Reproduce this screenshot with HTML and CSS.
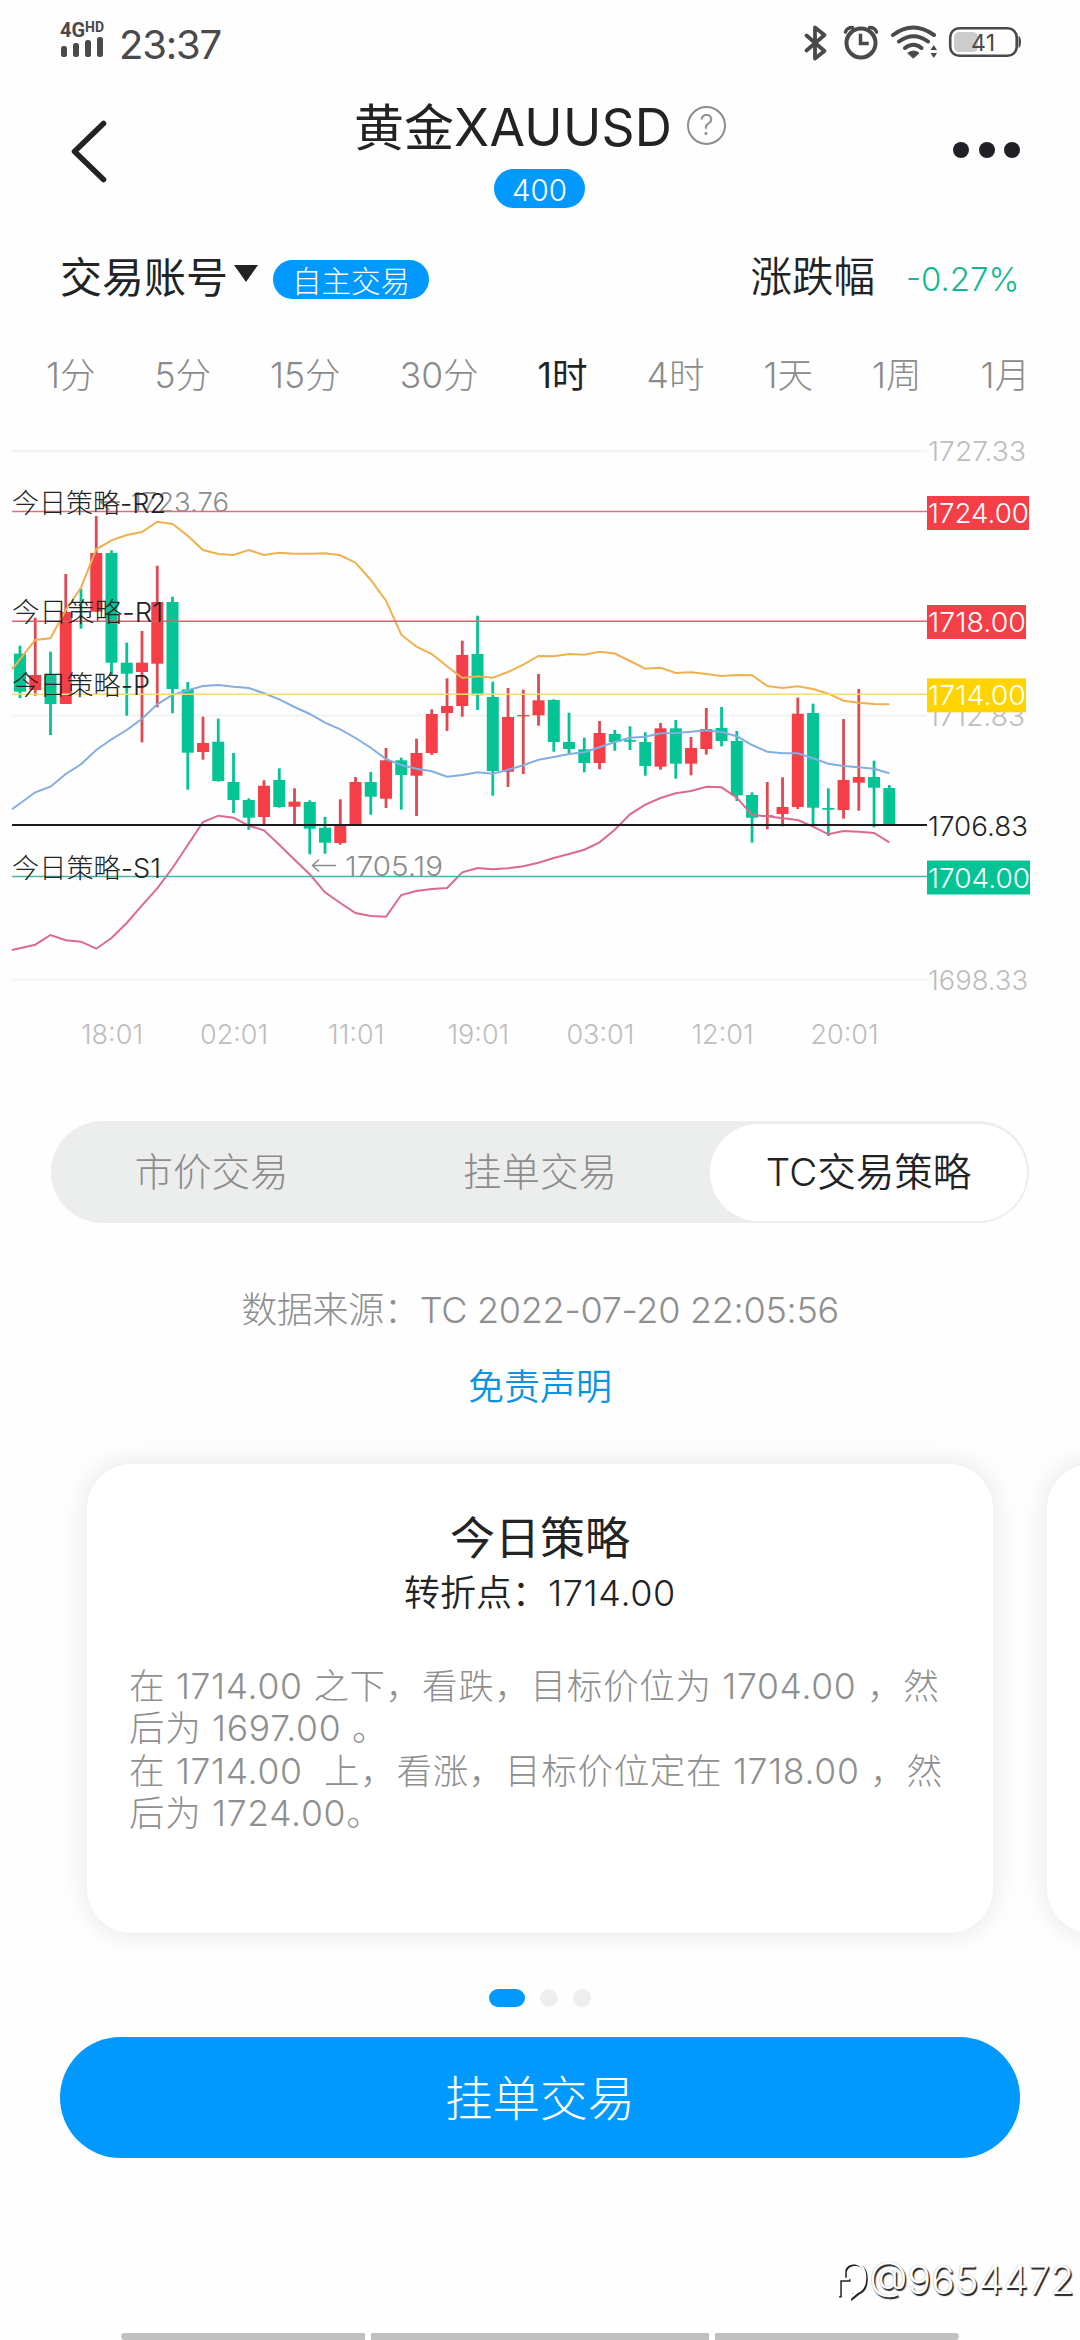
FILE: index.html
```html
<!DOCTYPE html>
<html lang="zh-CN">
<head>
<meta charset="utf-8">
<title>黄金XAUUSD</title>
<link rel="stylesheet" href="styles.css">
</head>
<body>
<div class="screen">
  <div class="status">
    <div class="signal">
      <div class="net"><span class="g4">4G</span><span class="hd">HD</span></div>
      <svg width="44" height="20" viewBox="0 0 44 20" fill="#4a4a4a"><rect x="1" y="9" width="6" height="11" rx="2.5"/><rect x="13" y="6" width="6" height="14" rx="2.5"/><rect x="25" y="3" width="6" height="17" rx="2.5"/><rect x="37" y="0" width="6" height="20" rx="2.5"/></svg>
    </div>
    <div class="time">23:37</div>
    <svg class="status-icons" width="220" height="40" viewBox="802 22 220 40" fill="none" stroke="#4a4a4a" stroke-width="4" stroke-linecap="round" stroke-linejoin="round">
      <path d="M805.500 35.500L823.500 51L814 58.500V27.500L823.500 35L805.500 50.500" stroke-width="3.800"/>
      <circle cx="860" cy="43" r="14.500"/><path d="M859.500 35.500V43.500H866" stroke-linecap="square" stroke-linejoin="miter" stroke-width="3.500"/>
      <path d="M844.500 32Q846 27.500 851.500 27.500M875.500 32Q874 27.500 868.500 27.500" stroke-width="3.500"/>
      <path d="M892 35Q912 20 933 35M898 41.500Q912.500 31 927 41.500M904 48Q912.500 41.500 920.500 48"/>
      <path d="M907 53Q912.500 49 918 53L912.500 58Z" fill="#4a4a4a" stroke-width="1"/>
      <path d="M929.500 50L932.800 45L936 50ZM929.500 53L932.800 58L936 53Z" fill="#4a4a4a" stroke="none"/>
      <rect x="953" y="32" width="24" height="20" rx="5" fill="#ccc" stroke="none"/>
      <rect x="949.200" y="28.200" width="66.500" height="27.600" rx="9" stroke-width="2.600"/>
      <path d="M1017.500 36Q1020 37 1020 42T1017.500 48Z" fill="#4a4a4a" stroke="none"/>
      <text class="battery-text" x="970" y="51" textLength="24">41</text>
    </svg>
  </div>

  <header class="header">
    <svg class="back" width="40" height="66" viewBox="0 0 40 66"><path d="M34.500 5.500L5.500 33.500L34.500 61.500" fill="none" stroke="#222325" stroke-width="5.500" stroke-linecap="round" stroke-linejoin="round"/></svg>
    <div class="heading">
      <div class="title"><span class="symbol">黄金<span class="ticker">XAUUSD</span></span><span class="help">?</span></div>
      <div class="pill leverage">400</div>
    </div>
    <div class="more"><i></i><i></i><i></i></div>
  </header>

  <div class="account">
    <span class="account-name">交易账号</span><i class="caret"></i><span class="pill mode">自主交易</span>
    <span class="change-name">涨跌幅</span><span class="change">-0.27%</span>
  </div>

  <nav class="periods"><span>1分</span><span>5分</span><span>15分</span><span>30分</span><span class="on">1时</span><span>4时</span><span>1天</span><span>1周</span><span>1月</span></nav>

  <svg class="chart" id="chart" width="1080" height="640" viewBox="0 430 1080 640"></svg>

  <div class="segments"><div>市价交易</div><div>挂单交易</div><div class="active">TC交易策略</div></div>

  <p class="source">数据来源：TC 2022-07-20 22:05:56</p>
  <a class="disclaimer">免责声明</a>

  <div class="cards">
    <section class="card">
      <h2>今日策略</h2>
      <h3>转折点：<span>1714.00</span></h3>
      <div class="advice">
        <div>在 1714.00 之下，看跌，目标价位为 1704.00 ，然</div>
        <div>后为 1697.00 。</div>
        <div>在 1714.00&nbsp; 上，看涨，目标价位定在 1718.00 ，然</div>
        <div>后为 1724.00。</div>
      </div>
    </section>
    <section class="card"></section>
  </div>

  <div class="dots"><i class="current"></i><i></i><i></i></div>
  <button class="submit">挂单交易</button>
  <div class="navbar"><i></i><i></i><i></i></div>

  <div class="watermark">
    <svg width="34" height="44" viewBox="0 0 34 44" fill="none" stroke-width="2.600"><g stroke="#222" transform="translate(1.500 1.500)"><path d="M4 38V21H9V12Q11 5 20 5Q30 7 30 20Q30 31 22 34L16 39V34M10 21H14"/></g><g stroke="#fff"><path d="M4 38V21H9V12Q11 5 20 5Q30 7 30 20Q30 31 22 34L16 39V34M10 21H14"/></g></svg><span>@9654472</span>
  </div>
</div>
<script src="chart.js"></script>
</body>
</html>
```

FILE: styles.css
```css
* { box-sizing: border-box; }
body { margin: 0; background: #fefefe; }
.screen {
  position: relative;
  width: 1080px;
  height: 2340px;
  overflow: hidden;
  display: flex;
  flex-direction: column;
  font-family: Inter, "Noto Sans CJK SC", sans-serif;
  font-weight: 300;
  color: #222325;
}
.status {
  height: 84px;
  padding: 20px 57px 0 60px;
  display: flex;
  align-items: flex-start;
  color: #4a4a4a;
}
.signal { width: 59px; }
.signal svg { display: block; }
.net { display: flex; height: 17px; align-items: flex-start; }
.g4 { font: 700 20px/20px Roboto, sans-serif; width: 25px; }
.hd { font: 700 14px/14px Roboto, sans-serif; }
.time { font-size: 40px; line-height: 50px; font-weight: 400; letter-spacing: -1.200px; }
.status-icons { margin-left: auto; margin-top: 2px; }
.battery-text { font-size: 23px; font-weight: 400; fill: #4a4a4a; stroke: none; }

.header { height: 166px; padding: 0 60px 0 69px; display: flex; align-items: flex-start; }
.back { margin-top: 34px; flex: none; }
.heading { margin-left: 245px; display: flex; flex-direction: column; }
.title { display: flex; height: 85px; width: 373px; line-height: 87px; font-size: 50px; font-weight: 400; }
.symbol { width: 333px; white-space: nowrap; }
.ticker { font-size: 51.500px; font-weight: 400; letter-spacing: .3px; }
.help {
  width: 39px; height: 39px; margin-top: 22px; border: 2px solid #8c8c8c; border-radius: 50%;
  font-size: 28px; line-height: 35px; text-align: center; font-weight: 300; color: #8c8c8c;
}
.pill { background: #0299ff; color: #fff; border-radius: 20px; height: 39px; line-height: 42px; text-align: center; white-space: nowrap; }
.leverage { width: 91px; margin-left: 140px; font-size: 29.500px; }
.more { margin: 58px 0 0 auto; display: flex; gap: 9.500px; }
.more i { width: 16px; height: 16px; border-radius: 50%; background: #202126; }

.account { height: 80px; padding: 0 61px 0 60px; display: flex; align-items: flex-start; line-height: 55px; white-space: nowrap; }
.account-name { font-size: 42px; font-weight: 400; width: 174px; }
.caret { margin-top: 15px; border: 12px solid transparent; border-top: 17px solid #222325; border-bottom: 0; }
.mode { width: 156px; margin: 10px 0 0 15px; font-size: 29.500px; }
.change-name { margin-left: auto; font-size: 41.500px; font-weight: 350; margin-right: 31px; }
.change { font-size: 33px; line-height: 59px; color: #14b890; width: 113px; }

.periods { height: 100px; padding: 22px 50px 0 46px; display: flex; justify-content: space-between; font-size: 35.500px; line-height: 48px; color: #8b8b8b; white-space: nowrap; }
.periods .on { color: #222325; font-weight: 400; }

.chart { display: block; flex: none; }
.chart text { font-size: 27px; }
.chart .axis { fill: #bdbdbd; }
.chart .mark { fill: #8c8c8c; }
.chart .dark { fill: #222325; }
.chart .light { fill: #fff; }

.segments { height: 102px; flex: none; margin: 51px 51px 0; padding: 2.500px 2px; display: grid; grid-template-columns: 321px 1fr 317px; border-radius: 51px; background: #eceeed; font-size: 38.500px; line-height: 97px; text-align: center; color: #8c8c8c; }
.segments > div { height: 97px; }
.segments div:not(.active) { position: relative; left: -2px; }
.segments .active { background: #fff; border-radius: 49px; color: #222325; font-weight: 350; }

.source { margin: 60px 0 0; height: 54px; line-height: 54px; font-size: 36px; letter-spacing: -.28px; text-align: center; color: #8f8f8f; white-space: nowrap; }
.disclaimer { margin-top: 23px; height: 54px; line-height: 54px; font-size: 36px; text-align: center; color: #0d94df; font-weight: 350; }

.cards { display: flex; gap: 54px; margin-left: 87px; margin-top: 50px; flex: none; }
.card { flex: none; width: 906px; height: 469px; border-radius: 45px; background: #fff; box-shadow: 0 0 24px 4px rgba(0, 0, 0, .08); padding: 46px 42px; text-align: center; }
.card h2 { margin: 0; font-size: 45px; line-height: 58px; font-weight: 400; }
.card h3 { margin: 0; font-size: 36px; line-height: 50px; font-weight: 350; }
.card h3 span { letter-spacing: .6px; }
.advice { margin-top: 48px; font-size: 35.500px; line-height: 42.300px; letter-spacing: .7px; text-align: left; color: #8f8f8f; white-space: nowrap; }

.dots { display: flex; gap: 15px; margin: 56px 0 0 489px; flex: none; }
.dots i { width: 18px; height: 18px; border-radius: 9px; background: #eee; }
.dots .current { width: 36px; background: #0299ff; }
.submit { flex: none; margin: 30px 60px 0; padding: 0; height: 121px; border: 0; border-radius: 61px; background: #0299ff; color: #fff; font: 300 47.500px/123px Inter, "Noto Sans CJK SC", sans-serif; }
.navbar { margin: auto 121px 0; height: 7px; display: grid; grid-template-columns: 244px 338px 244px; gap: 6px; }
.navbar i { background: #c0c0c0; }
.navbar i:first-child { border-radius: 4px 0 0 4px; }
.navbar i:last-child { border-radius: 0 4px 4px 0; }
.watermark { position: absolute; left: 835px; top: 2258px; display: flex; align-items: center; font-size: 39.500px; line-height: 44px; color: #fff; text-shadow: 1.500px 1.500px 1px #222, 0 0 1px #999; }
```

FILE: chart.js
```js
// Candles: [up/down, high, low, body top, body bottom] in chart pixels
const candles = [
["g",645.7,698,653.7,691.7],["r",617.7,695.7,675,690],["g",651.7,735,675,704],["r",574,704,612,704],
["g",588.7,628.7,611,612.5],["r",516,611.7,553,611.7],["g",550.3,676,553,662.7],["g",642.7,715.7,662.7,673.7],
["r",631,742.3,662.7,672],["r",565.7,707.3,602,663.7],["g",596.7,713.3,602,689],["g",682,789.7,689.3,752.7],
["r",716.7,759.7,743,752],["g",718.7,781.7,741.7,781],["g",753,813,782,800],["g",798.3,829.7,800,817.7],
["r",780.3,824.7,785.7,817],["g",768.3,807.7,780,807],["r",788.3,824,801.7,806.7],["g",800.3,854.3,802,828.7],
["g",817,853.7,827.7,842.7],["r",799.3,844.7,825,843],["r",777,824,782,824],["g",772,814.7,782,796.7],
["r",748,808,760.3,798.7],["g",757.7,809.7,760.3,775],["r",738.7,816,753,775.7],["r",709.3,755,714,753],
["r",678.3,731,706,713],["r",640.7,716.7,655,706],["g",615.7,710,654,695.3],["g",681.7,795.7,697,771],
["r",688,787,717,771.7],["r",689.7,774,715,716.3],["r",674,725.7,700.3,715.3],["g",699.3,751.7,700,742],
["g",712.7,753,742,749],["g",737.7,772.3,749.3,763],["r",721,769.3,733,763],["g",730,750.7,734,742],
["g",726.3,750,740,741.7],["g",732.3,775.7,742,766],["r",723,769.7,728.3,766.7],["g",720,778.7,728.3,763.7],
["r",737,775.3,748,763.7],["r",708,754.7,729,749],["g",707,746.3,728,741],["g",731,801,741,795.3],
["g",792.3,842.7,795,817.7],["r",782,829.3,815.3,817],["r",777.3,826.3,807,814],["r",697.7,809,713.7,807],
["g",703.7,825,713,807.7],["g",788.3,836,808,809.7],["r",719,818.7,780,810],["r",689,810.7,777,782.7],
["g",760.7,827.3,777,787.7],["g",785,824.3,788,824.3]];

// Bollinger bands: first value is at the chart's left edge, the rest from the second candle on
const bands = {
"#efb04f":[669.3,640,638.3,610,587.7,549.3,540.3,535,532,521.7,524,535.7,550,554,555,550,555,552.7,553.7,553.7,553.3,555.3,562.7,580,600.7,634.7,646.7,654,666.3,678,676.3,677.7,672,664.7,656,656.3,654,654.7,651.7,653.5,661,668.7,667.7,673,672.3,674,676,675,675.3,686,688,686.3,689,693.7,700.7,702.7,704,704.3],
"#82aee0":[809.3,792.3,786.7,774,764.3,750,739.3,730,718.7,704.3,695,690.3,686,685,686.7,688,693.3,699.3,707,714,722.7,729.3,738,747.7,759,765,768.7,771.3,776.7,775,772.3,773.7,769.7,765.3,759.7,757,754,752.3,747.3,742,737.7,736.7,733.3,733,731.7,730.3,732,736.3,745,751.7,753.3,753.3,758.3,763.7,766,767.3,768.7,773.3],
"#db6a92":[950,944.7,935,940.3,941.7,948.7,938,923,905.3,888.3,868,845,822,815.7,817.7,825.7,830.3,844.7,859.7,874.3,892.3,903,913,916,916.7,895,891,889,888,872.3,868,869.3,868.3,866.3,862.7,858,854,849.7,842.3,829.7,814.3,804.7,798,793.3,791,786.7,787.3,797.7,815,816.3,818.3,820,826.7,834.3,831,831.7,833,842.3]
};

const colors = { r: "#f43f49", g: "#04c496" };
const cx = i => 20 + i * 15.251;
const line = (y, c, w) => `<line x1="12" x2="927" y1="${y}" y2="${y}" stroke="${c}" stroke-width="${w}"/>`;
const text = (x, y, w, cls, s) => `<text class="${cls}" x="${x}" y="${y}" textLength="${w}" lengthAdjust="spacingAndGlyphs">${s}</text>`;
let out = [451, 715.5, 979.5].map(y => line(y, "#f4f4f4", 2.5)).join("");

out += text(97, 512, 132, "mark", "←\u00a01723.76");
for (const [i, [d, hi, lo, top, bottom]] of candles.entries()) {
  out += `<rect x="${cx(i) - 1.4}" y="${hi}" width="2.8" height="${lo - hi}" fill="${d === "r" ? "#dc4a54" : colors.g}"/>` +
         `<rect x="${cx(i) - 6}" y="${top}" width="12" height="${bottom - top}" fill="${colors[d]}"/>`;
}
for (const [color, ys] of Object.entries(bands)) {
  const pts = ys.map((y, i) => `${i ? cx(i) : 12},${y}`).join(" ");
  out += `<polyline points="${pts}" fill="none" stroke="${color}" stroke-width="2"/>`;
}
out += line(511.5, "#d9737b", 1.4) + line(621.3, "#d9626c", 1.4) + line(694.3, "#f5dc72", 1.6) + line(825, "#1c1c20", 2) + line(876.5, "#4bb3a4", 1.4);
out += `<path d="M336 865.500H312.500M319 859.500L312.500 865.500L319 871.500" fill="none" stroke="#8c8c8c" stroke-width="1.500"/>` + text(345, 876, 98, "mark", "1705.19");
for (const [y, s, w] of [[512.5, "R2", 154], [621.5, "R1", 151], [694.5, "P", 138], [877.5, "S1", 149]])
  out += text(12, y, w, "dark", "今日策略-" + s);

out += text(928, 461, 98, "axis", "1727.33") + text(928, 726, 97, "axis", "1712.83") + text(928, 990, 100, "axis", "1698.33") + text(928, 835.5, 100, "dark", "1706.83");
for (const [y, w, c, s] of [[496, 102, colors.r, "1724.00"], [605, 99, colors.r, "1718.00"], [678.3, 99, "#ffd401", "1714.00"], [860.5, 103, colors.g, "1704.00"]])
  out += `<rect x="927" y="${y}" width="${w}" height="34" fill="${c}"/>` + text(928, y + 27, w - 1, "light", s);
["18:01", "02:01", "11:01", "19:01", "03:01", "12:01", "20:01"].forEach((t, i) => {
  out += `<text class="axis" x="${112 + i * 122.1}" y="1044" text-anchor="middle">${t}</text>`;
});
document.getElementById("chart").innerHTML = out;
```
